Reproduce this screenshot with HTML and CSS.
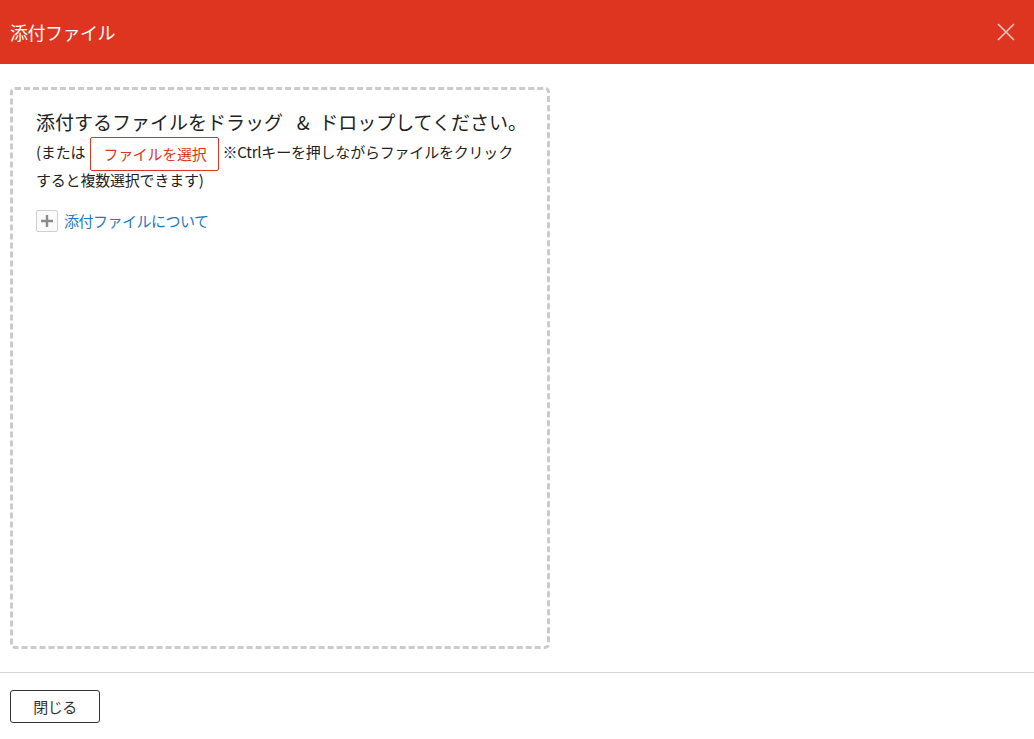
FILE: index.html
```html
<!DOCTYPE html>
<html lang="ja">
    <head>
        <meta charset="UTF-8" />
        <title>添付ファイル</title>
        <link rel="stylesheet" href="styles.css">
    </head>
    <body>
        <!-- ヘッダー -->
        <div class="hd">
            <h1 class="ttl">添付ファイル</h1>
            <button class="closeBtn" title="閉じる">
                <svg width="18" height="18" viewBox="0 0 18 18">
                    <path d="M1 1 L17 17 M17 1 L1 17" stroke="#f6c9c3" stroke-width="1.6" fill="none"/>
                </svg>
            </button>
        </div>

        <!-- 本文 -->
        <div class="cont">
            <div class="dropBox">
                <p class="lead">添付するファイルをドラッグ &ensp;&amp;&ensp;ドロップしてください。</p>
                <p class="sub">(または <span class="selBtn">ファイルを選択</span> ※Ctrlキーを押しながらファイルをクリック<br>すると複数選択できます)</p>
                <a class="about" href="#">
                    <span class="plus">
                        <svg width="12" height="12" viewBox="0 0 12 12">
                            <path d="M6 0 V12 M0 6 H12" stroke="#8a8a8a" stroke-width="2.4" fill="none"/>
                        </svg>
                    </span>
                    添付ファイルについて
                </a>
            </div>
        </div>

        <!-- フッター -->
        <div class="ft">
            <button class="btn">閉じる</button>
        </div>
    </body>
</html>
```

FILE: styles.css
```css
html, body {
    margin: 0;
    padding: 0;
}
body {
    width: 1034px;
    height: 739px;
    background: #fff;
    color: #333;
    font-family: "Noto Sans CJK JP", "Noto Sans", sans-serif;
    overflow: hidden;
}

/* ヘッダー */
.hd {
    height: 64px;
    background-color: #dd3520;
    display: flex;
    align-items: center;
    justify-content: space-between;
    padding: 0 10px;
}
.ttl {
    margin: 0;
    font-size: 18px;
    font-weight: normal;
    color: #fff;
    letter-spacing: -0.5px;
}
.closeBtn {
    border: 0;
    background: none;
    padding: 0;
    margin-right: 9px;
    line-height: 0;
    cursor: pointer;
}

/* 本文 */
.cont {
    height: 609px;
    padding: 23px 10px 0;
    border-bottom: 1px solid #d4d4d4;
    box-sizing: border-box;
}
.dropBox {
    width: 540px;
    height: 562px;
    box-sizing: border-box;
    border: 3px dashed #cbcbcb;
    border-radius: 5px;
    padding: 18px 23px;
}
.lead {
    margin: 0 0 3px;
    font-size: 19px;
    line-height: 28px;
    color: #222;
    white-space: nowrap;
}
.sub {
    margin: 0;
    font-size: 15px;
    line-height: 26px;
    color: #222;
    letter-spacing: -0.2px;
}
/* ファイル選択ボタン */
.selBtn {
    display: inline-block;
    margin: -4px 0 -4px 2px;
    padding: 2px 12px;
    border: 1px solid #dd3520;
    border-radius: 2px;
    color: #dd3520;
    line-height: 28px;
    vertical-align: middle;
    letter-spacing: -0.3px;
}
/* 添付ファイルについて */
.about {
    display: flex;
    width: fit-content;
    align-items: center;
    gap: 6px;
    margin-top: 17px;
    font-size: 15px;
    color: #1e78c8;
    text-decoration: none;
    letter-spacing: -0.5px;
}
.plus {
    width: 20px;
    height: 20px;
    border: 1px solid #cfcfcf;
    border-radius: 2px;
    display: flex;
    align-items: center;
    justify-content: center;
    background: #fafafa;
}

/* フッター */
.ft {
    padding: 17px 10px;
}
.btn {
    width: 90px;
    height: 33px;
    border: 1px solid #333;
    border-radius: 3px;
    background: #fff;
    font-family: inherit;
    font-size: 15px;
    color: #333;
    letter-spacing: -0.5px;
}
```
